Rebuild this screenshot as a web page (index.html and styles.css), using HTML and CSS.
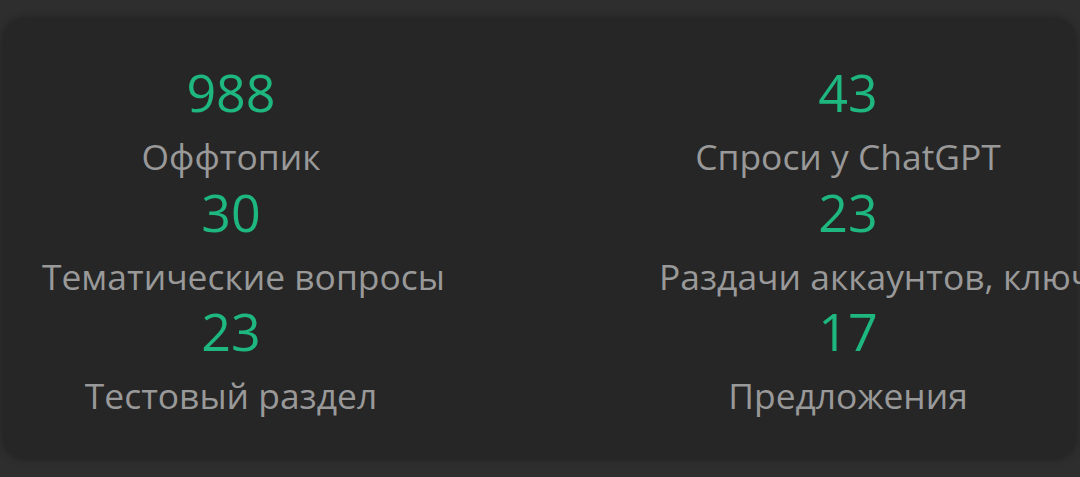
FILE: index.html
```html
<!DOCTYPE html>
<html lang="ru">
<head>
<meta charset="utf-8">
<link rel="stylesheet" href="styles.css">
</head>
<body>
<div class="card">
  <div class="col">
    <div class="stat"><div class="num">988</div><div class="label">Оффтопик</div></div>
    <div class="stat"><div class="num">30</div><div class="label">Тематические вопросы</div></div>
    <div class="stat"><div class="num">23</div><div class="label">Тестовый раздел</div></div>
  </div>
  <div class="col">
    <div class="stat"><div class="num">43</div><div class="label">Спроси у ChatGPT</div></div>
    <div class="stat"><div class="num">23</div><div class="label">Раздачи аккаунтов, ключей</div></div>
    <div class="stat"><div class="num">17</div><div class="label">Предложения</div></div>
  </div>
</div>
</body>
</html>
```

FILE: styles.css
```css
html, body {
  margin: 0;
  padding: 0;
  background: #2e2e2e;
  overflow: hidden;
  font-family: "Open Sans", "Noto Sans", sans-serif;
}
body {
  width: 1080px;
  height: 477px;
  padding: 18px 0 0 3px;
  box-sizing: border-box;
}
.card {
  width: 1073px;
  box-sizing: border-box;
  background: #262626;
  border-radius: 22px;
  box-shadow: 0 0 8px rgba(0, 0, 0, 0.3);
  padding: 44px 39px 38px;
  display: grid;
  grid-template-columns: 378px 378px;
  justify-content: space-between;
}
.col {
  display: flex;
  flex-direction: column;
  min-width: 0;
}
.stat {
  display: flex;
  flex-direction: column;
  align-items: center;
  height: 119.5px;
}
.num {
  color: #1eb77f;
  font-size: 52px;
  line-height: 60px;
}
.label {
  color: #999999;
  font-size: 35.4px;
  line-height: 50px;
  margin-top: 9px;
  white-space: nowrap;
  align-self: stretch;
  text-align: center;
}
```
